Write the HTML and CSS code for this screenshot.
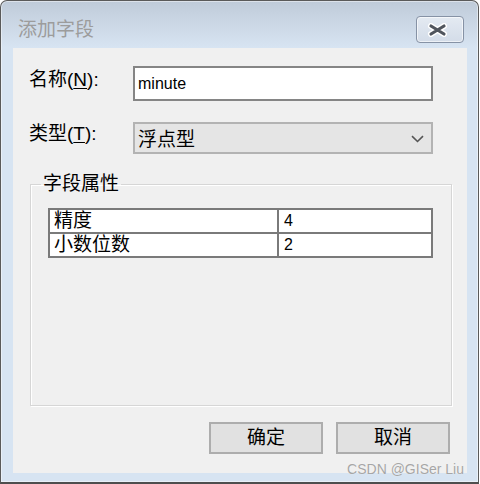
FILE: index.html
```html
<!DOCTYPE html>
<html lang="zh-CN">
<head>
<meta charset="utf-8">
<title>添加字段</title>
<link rel="stylesheet" href="styles.css">
</head>
<body>
<div class="window">
  <div class="titlebar">
    <div class="title">添加字段</div>
    <button class="close" type="button" aria-label="关闭">
      <svg width="22" height="14" viewBox="0 0 22 14">
        <path d="M4 3 L17 11 M17 3 L4 11" stroke="#ffffff" stroke-width="6" stroke-linecap="round" fill="none"/>
        <path d="M4 3 L17 11 M17 3 L4 11" stroke="#50555d" stroke-width="3.2" stroke-linecap="round" fill="none"/>
      </svg>
    </button>
  </div>
  <div class="client">
    <div class="row row-name">
      <label class="label">名称(<u>N</u>):</label>
      <div class="textbox">minute</div>
    </div>
    <div class="row row-type">
      <label class="label">类型(<u>T</u>):</label>
      <div class="combo">
        <span class="combo-text">浮点型</span>
        <svg class="chev" width="13" height="8" viewBox="0 0 13 8">
          <path d="M1 1.2 L6.5 6.5 L12 1.2" stroke="#555555" stroke-width="1.6" fill="none"/>
        </svg>
      </div>
    </div>
    <fieldset class="group">
      <legend class="group-title">字段属性</legend>
      <table class="props">
        <tr><td class="k">精度</td><td class="v">4</td></tr>
        <tr><td class="k">小数位数</td><td class="v">2</td></tr>
      </table>
    </fieldset>
    <div class="buttons">
      <button class="btn" type="button">确定</button>
      <button class="btn" type="button">取消</button>
    </div>
  </div>
  <div class="watermark">CSDN @GISer Liu</div>
</div>
</body>
</html>
```

FILE: styles.css
```css
html, body {
  margin: 0;
  padding: 0;
  background: #ffffff;
}

body {
  width: 480px;
  height: 484px;
  font-family: "Liberation Sans", "Noto Sans CJK SC", sans-serif;
  font-size: 19px;
  color: #000;
}

.window {
  position: relative;
  box-sizing: border-box;
  width: 479px;
  height: 484px;
  border: 1px solid #5a5a5a;
  border-bottom: 2px solid #4e4e4e;
  border-radius: 7px 7px 0 0;
  background: linear-gradient(#bfcbd9 0px, #cfdbe9 30px, #d7e4f2 47px, #d7e4f2 100%);
  box-shadow: inset 0 0 0 1px rgba(255,255,255,0.45);
  display: flex;
  flex-direction: column;
}

.titlebar {
  height: 47px;
  display: flex;
  align-items: flex-start;
  justify-content: space-between;
  padding: 0 14px 0 17px;
  flex: none;
}

.title {
  margin-top: 18px;
  line-height: 22px;
  font-size: 19px;
  color: #9c9c9c;
}

.close {
  margin-top: 15px;
  width: 48px;
  height: 27px;
  padding: 0;
  border: 1px solid #8692a5;
  border-radius: 4px;
  background: linear-gradient(#e4eaf2, #d3dce8);
  box-shadow: inset 0 0 0 1px rgba(255,255,255,0.6);
  display: flex;
  align-items: center;
  justify-content: center;
}

.close svg {
  display: block;
  margin-left: -4px;
}

.client {
  flex: 1;
  margin: 0 11px 9px 12px;
  background: #f0f0f0;
  display: flex;
  flex-direction: column;
  padding: 18px 0 19px 0;
  min-height: 0;
}

.row {
  display: flex;
  align-items: center;
  padding-left: 16px;
}

.row-type {
  margin-top: 21px;
}

.label {
  width: 104px;
  line-height: 22px;
  padding-bottom: 8px;
}

.label u {
  text-decoration: underline;
  text-underline-offset: 2px;
}

.textbox {
  box-sizing: border-box;
  width: 300px;
  height: 35px;
  border: 2px solid #858585;
  background: #ffffff;
  font-size: 16px;
  line-height: 31px;
  padding-left: 3px;
}

.combo {
  box-sizing: border-box;
  width: 300px;
  height: 32px;
  border: 2px solid #b3b3b3;
  background: #e5e5e5;
  display: flex;
  align-items: center;
  justify-content: space-between;
  padding: 0 7px 0 3px;
}

.combo-text {
  line-height: 22px;
  padding-top: 3px;
}

.chev {
  display: block;
  margin-top: 2px;
}

.group {
  flex: 1;
  margin: 19px 15px 2px 17px;
  padding: 0;
  border: 1px solid #d6d6d6;
  box-shadow: inset 1px 1px 0 #ffffff, 1px 1px 0 #ffffff;
  min-width: 0;
}

.group-title {
  margin-left: 10px;
  padding: 0 2px;
  line-height: 22px;
  font-size: 19px;
}

.props {
  margin: 13px 18px 0 17px;
  width: 385px;
  border-collapse: collapse;
  background: #ffffff;
}

.props td {
  border: 2px solid #7a7a7a;
  height: 22px;
  padding: 0 4px;
  line-height: 22px;
}

.props td.k {
  width: 219px;
}

.props td.v {
  font-size: 16px;
  padding-left: 5px;
}

.buttons {
  display: flex;
  justify-content: flex-end;
  gap: 13px;
  margin-top: 14px;
  padding-right: 17px;
}

.btn {
  box-sizing: border-box;
  width: 114px;
  height: 32px;
  border: 2px solid #adadad;
  background: #e1e1e1;
  font-family: "Liberation Sans", "Noto Sans CJK SC", sans-serif;
  font-size: 19px;
  line-height: 22px;
  padding: 0;
  color: #000;
}

.watermark {
  position: absolute;
  right: 14px;
  top: 460px;
  font-size: 14px;
  line-height: 16px;
  color: #a6a6a6;
  text-shadow: 0 0 1px rgba(255,255,255,0.8);
}
```
